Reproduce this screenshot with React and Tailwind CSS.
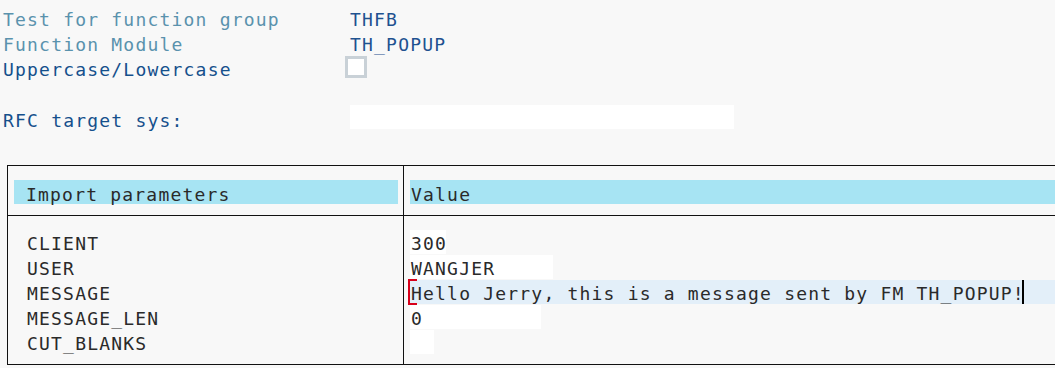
import React from "react";

const mono = "font-['DejaVu_Sans_Mono',monospace] text-[18px] tracking-[1.2px]";

function TopRow({ label, labelClass, children, labelW = "w-[347px]" }) {
  return (
    <div className="flex h-[25px] items-start">
      <div className={`${labelW} shrink-0 h-[25px] leading-[29px] ${labelClass}`}>{label}</div>
      {children}
    </div>
  );
}

const rows = [
  { name: "CLIENT", value: "300", w: "w-[36px]", bg: "bg-white" },
  { name: "USER", value: "WANGJER", w: "w-[143px]", bg: "bg-white" },
  { name: "MESSAGE", value: "Hello Jerry, this is a message sent by FM TH_POPUP!", w: "flex-1", bg: "bg-[#e3eff9]", active: true },
  { name: "MESSAGE_LEN", value: "0", w: "w-[131px]", bg: "bg-white" },
  { name: "CUT_BLANKS", value: "", w: "w-[24px]", bg: "bg-white" },
];

export default function App() {
  return (
    <div className={`w-[1055px] h-[368px] overflow-hidden bg-[#f8f8f8] ${mono}`}>
      <div className="pl-[3px] pt-[5px]">
        <TopRow label="Test for function group" labelClass="text-[#5a92ad]">
          <div className="h-[25px] leading-[29px] text-[#1f5290]">THFB</div>
        </TopRow>
        <TopRow label="Function Module" labelClass="text-[#5a92ad]">
          <div className="h-[25px] leading-[29px] text-[#1f5290]">TH_POPUP</div>
        </TopRow>
        <TopRow label="Uppercase/Lowercase" labelClass="text-[#15508c]" labelW="w-[342px]">
          <div className="mt-[1px] h-[22px] w-[22px] border-[3px] border-[#c9d1d7] bg-white" />
        </TopRow>
        <div className="h-[26px]" />
        <TopRow label="RFC target sys:" labelClass="text-[#15508c]">
          <div className="-mt-[1px] h-[24px] w-[384px] bg-white" />
        </TopRow>
      </div>

      <div className="ml-[7px] mt-[34px] border-l border-t border-b border-[#111] text-[#2a2a2a]">
        <div className="flex border-b border-[#111]">
          <div className="w-[396px] shrink-0 border-r border-[#111] pl-[6px] pr-[5px] pt-[14px] pb-[11px]">
            <div className="h-[24px] overflow-visible bg-[#a7e4f3] pl-[12px] leading-[29px]">Import parameters</div>
          </div>
          <div className="flex-1 pl-[6px] pt-[14px] pb-[11px]">
            <div className="h-[24px] overflow-visible bg-[#a7e4f3] pl-[1px] leading-[29px]">Value</div>
          </div>
        </div>
        <div className="flex">
          <div className="w-[396px] shrink-0 border-r border-[#111] pl-[19px] pt-[14px] pb-[9px]">
            {rows.map((r) => (
              <div key={r.name} className="h-[25px] leading-[28px]">{r.name}</div>
            ))}
          </div>
          <div className="flex-1 pl-[6px] pt-[14px] pb-[9px]">
            {rows.map((r) => (
              <div key={r.name} className="flex h-[25px]">
                <div className={`relative h-[24px] ${r.w} ${r.bg} pl-[1px] leading-[28px] whitespace-nowrap`}>
                  {r.active && (
                    <>
                      <span className="absolute left-[-2px] top-[-1px] h-[26px] w-[9px] border-l-2 border-t-2 border-b-2 border-[#d8001a]" />
                      <span className="inline-block">{r.value}</span>
                      <span className="absolute left-[612px] top-0 h-[24px] w-[2px] bg-black" />
                    </>
                  )}
                  {!r.active && r.value}
                </div>
              </div>
            ))}
          </div>
        </div>
      </div>
    </div>
  );
}
